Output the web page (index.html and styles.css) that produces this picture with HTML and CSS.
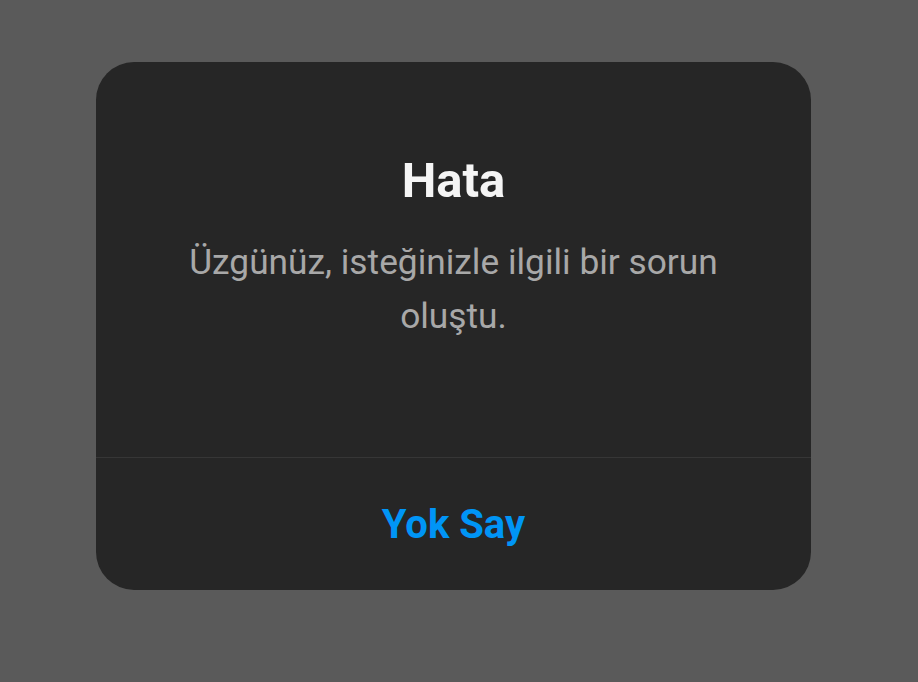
FILE: index.html
```html
<!DOCTYPE html>
<html lang="tr">
<head>
<meta charset="utf-8">
<link rel="stylesheet" href="styles.css">
</head>
<body>
<div class="dialog">
  <div class="content">
    <h1 class="title">Hata</h1>
    <p class="message">Üzgünüz, isteğinizle ilgili bir sorun oluştu.</p>
  </div>
  <div class="actions">
    <button class="btn">Yok Say</button>
  </div>
</div>
</body>
</html>
```
FILE: styles.css
```css
html, body {
  margin: 0;
  height: 100%;
  background: #5a5a5a;
}
body {
  padding: 62px 0 0 96px;
  box-sizing: border-box;
  font-family: Roboto, "Liberation Sans", sans-serif;
}
.dialog {
  width: 715px;
  height: 528px;
  background: #262626;
  border-radius: 38px;
  display: flex;
  flex-direction: column;
  overflow: hidden;
}
.content {
  height: 396px;
  border-bottom: 1px solid #363636;
  box-sizing: border-box;
  display: flex;
  flex-direction: column;
  align-items: center;
  padding: 91px 60px 0;
}
.title {
  margin: 0;
  font-size: 49px;
  font-weight: 700;
  color: #f5f5f5;
  line-height: 56px;
}
.message {
  margin: 26px 0 0;
  font-size: 35.3px;
  line-height: 54px;
  color: #a8a8a8;
  text-align: center;
  max-width: 560px;
}
.actions {
  flex: 1;
  display: flex;
  align-items: center;
  justify-content: center;
}
.btn {
  background: none;
  border: 0;
  padding: 0;
  font-family: inherit;
  font-size: 40px;
  font-weight: 700;
  color: #0095f6;
}
```
